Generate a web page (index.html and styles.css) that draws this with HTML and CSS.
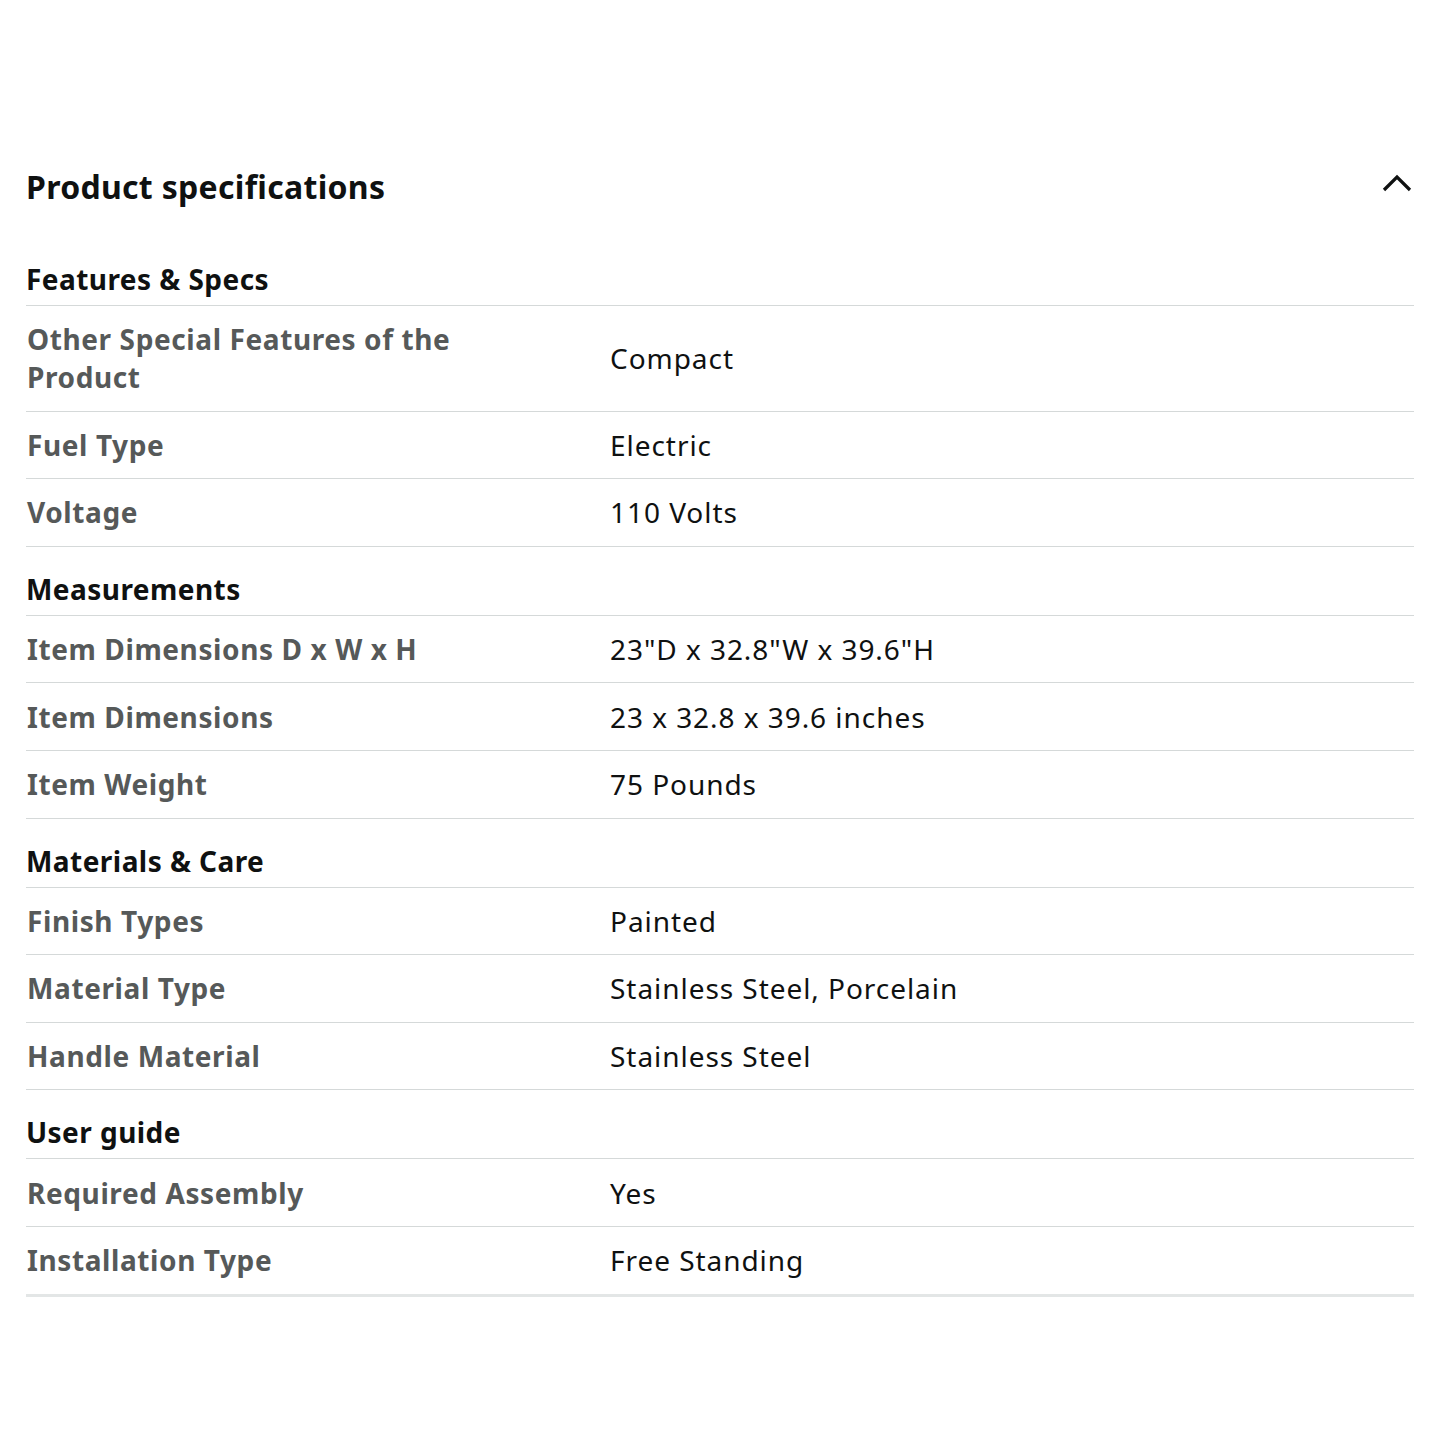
FILE: index.html
```html
<!DOCTYPE html>
<html lang="en">
<head>
<meta charset="utf-8">
<title>Product specifications</title>
<link rel="stylesheet" href="styles.css">
</head>
<body>
<main class="page">
  <header class="head">
    <h2 class="title">Product specifications</h2>
    <svg class="chev" width="30" height="18" viewBox="0 0 30 18"><path d="M2 16 L15 3 L28 16" fill="none" stroke="#0f1111" stroke-width="3.2"/></svg>
  </header>

  <section class="group first">
    <h3 class="ghead">Features &amp; Specs</h3>
    <div class="row"><div class="k">Other Special Features of the Product</div><div class="v">Compact</div></div>
    <div class="row"><div class="k">Fuel Type</div><div class="v">Electric</div></div>
    <div class="row"><div class="k">Voltage</div><div class="v">110 Volts</div></div>
  </section>

  <section class="group">
    <h3 class="ghead">Measurements</h3>
    <div class="row"><div class="k">Item Dimensions D x W x H</div><div class="v">23"D x 32.8"W x 39.6"H</div></div>
    <div class="row"><div class="k">Item Dimensions</div><div class="v">23 x 32.8 x 39.6 inches</div></div>
    <div class="row"><div class="k">Item Weight</div><div class="v">75 Pounds</div></div>
  </section>

  <section class="group">
    <h3 class="ghead">Materials &amp; Care</h3>
    <div class="row"><div class="k">Finish Types</div><div class="v">Painted</div></div>
    <div class="row"><div class="k">Material Type</div><div class="v">Stainless Steel, Porcelain</div></div>
    <div class="row"><div class="k">Handle Material</div><div class="v">Stainless Steel</div></div>
  </section>

  <section class="group last">
    <h3 class="ghead">User guide</h3>
    <div class="row"><div class="k">Required Assembly</div><div class="v">Yes</div></div>
    <div class="row"><div class="k">Installation Type</div><div class="v">Free Standing</div></div>
  </section>
</main>
</body>
</html>
```
FILE: styles.css
```css
* { box-sizing: border-box; }
html, body { margin: 0; padding: 0; background: #fff; }
body { font-family: "Noto Sans", "Open Sans", sans-serif; color: #0f1111; }
.page { padding: 164px 26px 0; }
.head { display: flex; align-items: center; justify-content: space-between; height: 46px; }
.title { margin: 0; font-size: 32px; font-weight: 700; line-height: 46px; letter-spacing: 0.3px; }
.chev { margin-right: 2px; margin-top: -8px; }
.ghead { margin: 0; padding: 23px 0 7px; font-size: 28px; font-weight: 700; line-height: 38px; letter-spacing: 0.45px; border-bottom: 1px solid #d5d9d9; }
.first .ghead { padding-top: 50px; }
.row { display: grid; grid-template-columns: 584px 1fr; align-items: center; padding: 14.3px 0; border-bottom: 1px solid #d5d9d9; font-size: 28px; line-height: 38px; }
.k { padding-left: 1px; font-weight: 700; color: #565959; max-width: 440px; letter-spacing: 0.6px; }
.v { color: #0f1111; letter-spacing: 0.95px; }
.last .row:last-child { border-bottom: 3px solid #e3e6e6; }
```
